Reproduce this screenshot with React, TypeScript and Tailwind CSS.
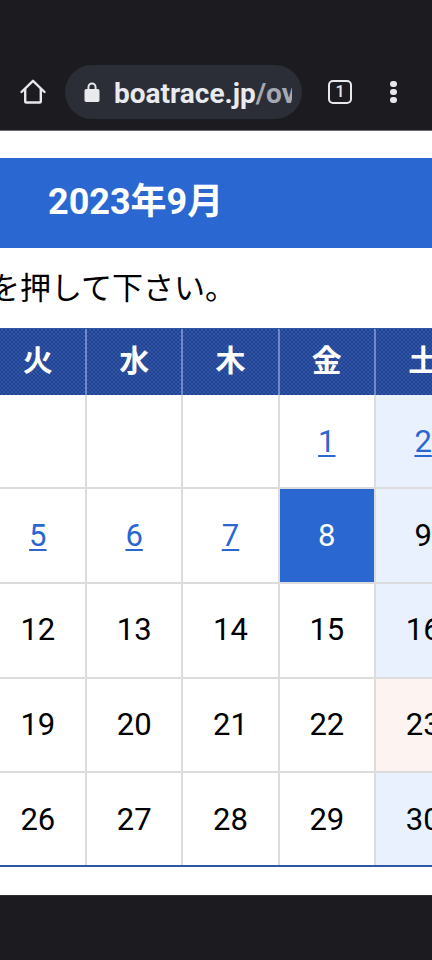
import React from "react";

const font = { fontFamily: "Roboto, 'Noto Sans CJK JP', sans-serif" };

type Cell = { t: string; link?: boolean; today?: boolean };
const rows: Cell[][] = [
  [{ t: "" }, { t: "" }, { t: "" }, { t: "1", link: true }, { t: "2", link: true }],
  [{ t: "5", link: true }, { t: "6", link: true }, { t: "7", link: true }, { t: "8", today: true }, { t: "9" }],
  [{ t: "12" }, { t: "13" }, { t: "14" }, { t: "15" }, { t: "16" }],
  [{ t: "19" }, { t: "20" }, { t: "21" }, { t: "22" }, { t: "23" }],
  [{ t: "26" }, { t: "27" }, { t: "28" }, { t: "29" }, { t: "30" }],
];
const rowHeights = ["h-[94px]", "h-[95px]", "h-[95px]", "h-[94px]", "h-[94px]"];
const days = ["火", "水", "木", "金", "土"];

export default function App() {
  return (
    <div className="h-[960px] w-[432px] overflow-hidden bg-white flex flex-col" style={font}>
      <div className="h-[131px] bg-[#1c1c20] border-b border-[#6b6b70] flex items-end pb-[11px] shrink-0">
        <div className="flex items-center h-[54px] w-full">
          <svg className="ml-[20px] w-[26px] h-[26px]" viewBox="0 0 26 26" fill="none" stroke="#e8e8ea" strokeWidth="2.4" strokeLinejoin="round" strokeLinecap="round">
            <path d="M1.5 13 13 1.8 24.500 13" />
            <path d="M5.200 10v12.500a1 1 0 0 0 1 1h13.600a1 1 0 0 0 1-1V10" />
          </svg>
          <div className="ml-[19px] w-[237px] h-[54px] rounded-full bg-[#2c2e37] flex items-center overflow-hidden pl-[19px]">
            <svg className="w-[16px] h-[20px] shrink-0" viewBox="0 0 16 20" fill="#e8eaed">
              <path d="M3.500 8V5a4.500 4.500 0 0 1 9 0v3h-1.900V5a2.600 2.600 0 0 0-5.200 0v3Z" />
              <rect x="0.500" y="7" width="15" height="13" rx="1.800" />
            </svg>
            <div className="ml-[14px] w-[178px] overflow-hidden whitespace-nowrap text-[28px] leading-[54px] font-bold text-[#e8eaed] pt-[3px]">
              boatrace.jp<span className="text-[#a6a9b2]">/ovv</span>
            </div>
          </div>
          <div className="ml-[26px] w-[24px] h-[24px] rounded-[5px] border-2 border-[#e8e8ea] flex items-center justify-center text-[#e8e8ea] text-[16px] leading-none font-medium">
            1
          </div>
          <div className="ml-[38px] flex flex-col gap-[1.500px]">
            <div className="w-[6.500px] h-[6.500px] rounded-full bg-[#e8e8ea]" />
            <div className="w-[6.500px] h-[6.500px] rounded-full bg-[#e8e8ea]" />
            <div className="w-[6.500px] h-[6.500px] rounded-full bg-[#e8e8ea]" />
          </div>
        </div>
      </div>

      <div className="mt-[27px] h-[90px] bg-[#2b67d1] shrink-0 flex items-center pl-[48px] text-white text-[36px] font-bold leading-none pb-[2px]">
        2023年9月
      </div>

      <div className="h-[80px] shrink-0 flex items-center -ml-[11px] whitespace-nowrap text-[31px] leading-none text-black">
        を押して下さい。
      </div>

      <div className="shrink-0 w-[482px] -ml-[9.330px] overflow-hidden">
        <div className="border-t border-[#2f57a8] grid grid-cols-[repeat(5,96.330px)] h-[67px] bg-[#27499a] bg-[conic-gradient(#2f56a8_25%,#22428f_0_50%,#2f56a8_0_75%,#22428f_0)] bg-[length:4px_4px]">
          {days.map((d) => (
            <div key={d} className="flex items-center justify-center text-white text-[30px] font-bold leading-none pb-[3px] border-r-2 border-[#6f8bc6]">
              {d}
            </div>
          ))}
        </div>
        {rows.map((row, r) => (
          <div key={r} className={`grid grid-cols-[repeat(5,96.330px)] ${rowHeights[r]} border-b-2 ${r === 4 ? "border-[#2f57a8]" : "border-[#dcdcdc]"}`}>
            {row.map((c, i) => {
              const weekend = i === 4;
              const bg = c.today ? "bg-[#2b67d1] text-white" : weekend ? (r === 3 ? "bg-[#fdf3f1] text-black" : "bg-[#eaf1fe] text-black") : "bg-white text-black";
              return (
                <div key={i} className={`flex items-center justify-center text-[31px] font-[370] leading-none whitespace-nowrap border-r-2 border-[#dcdcdc] ${r === 2 || r === 3 ? "pb-[2px]" : ""} ${bg}`}>
                  {c.link ? <span className="text-[#2b67d1] underline underline-offset-[3px] decoration-2">{c.t}</span> : c.t}
                </div>
              );
            })}
          </div>
        ))}
      </div>

      <div className="h-[28px] bg-white shrink-0" />
      <div className="flex-1 bg-[#1c1c20] border-t border-[#2c2c30]" />
    </div>
  );
}
